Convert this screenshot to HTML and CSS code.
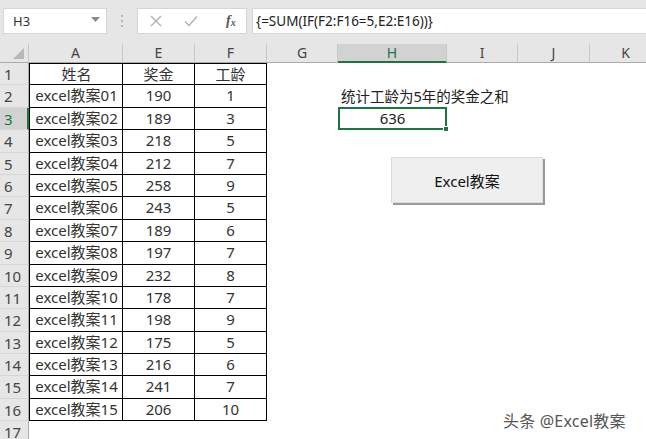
FILE: index.html
```html
<!DOCTYPE html>
<html lang="zh">
<head>
<meta charset="utf-8">
<link rel="stylesheet" href="styles.css">
</head>
<body>
<div class="app">
  <div class="toolbar">
    <div class="namebox"><span class="nb-text">H3</span>
      <svg class="nb-arrow" width="9" height="6" viewBox="0 0 9 6"><path d="M0 0h9L4.5 5z" fill="#8a8a8a"/></svg>
    </div>
    <div class="dots"><i></i><i></i><i></i></div>
    <div class="fbtns">
      <svg width="12" height="12" viewBox="0 0 12 12"><path d="M1 1L11 11M11 1L1 11" stroke="#b0b0b0" stroke-width="1.3"/></svg>
      <svg width="14" height="12" viewBox="0 0 14 12"><path d="M1 6.5L5 10.5L13 1.5" stroke="#b0b0b0" stroke-width="1.4" fill="none"/></svg>
      <span class="fx">f<sub>x</sub></span>
    </div>
    <div class="formula">{=SUM(IF(F2:F16=5,E2:E16))}</div>
  </div>

  <div class="sheet">
    <div class="corner"><svg width="11" height="11" viewBox="0 0 11 11"><path d="M11 0V11H0z" fill="#b7b7b7"/></svg></div>
    <div class="ch">A</div><div class="ch">E</div><div class="ch">F</div><div class="ch">G</div><div class="ch sel">H</div><div class="ch">I</div><div class="ch">J</div><div class="ch">K</div>

    <div class="rh">1</div><div class="c t top first">姓名</div><div class="c t top">奖金</div><div class="c t top">工龄</div><div class="rest"></div>
    <div class="rh">2</div><div class="c t first">excel教案01</div><div class="c t">190</div><div class="c t">1</div><div class="e"></div><div class="lbl">统计工龄为5年的奖金之和</div><div class="e3"></div>
    <div class="rh rsel">3</div><div class="c t first">excel教案02</div><div class="c t">189</div><div class="c t">3</div><div class="e"></div><div class="active">636<span class="handle"></span></div><div class="e3"></div>
    <div class="rh">4</div><div class="c t first">excel教案03</div><div class="c t">218</div><div class="c t">5</div><div class="rest"></div>
    <div class="rh">5</div><div class="c t first">excel教案04</div><div class="c t">212</div><div class="c t">7</div><div class="rest"></div>
    <div class="rh">6</div><div class="c t first">excel教案05</div><div class="c t">258</div><div class="c t">9</div><div class="rest"></div>
    <div class="rh">7</div><div class="c t first">excel教案06</div><div class="c t">243</div><div class="c t">5</div><div class="rest"></div>
    <div class="rh">8</div><div class="c t first">excel教案07</div><div class="c t">189</div><div class="c t">6</div><div class="rest"></div>
    <div class="rh">9</div><div class="c t first">excel教案08</div><div class="c t">197</div><div class="c t">7</div><div class="rest"></div>
    <div class="rh">10</div><div class="c t first">excel教案09</div><div class="c t">232</div><div class="c t">8</div><div class="rest"></div>
    <div class="rh">11</div><div class="c t first">excel教案10</div><div class="c t">178</div><div class="c t">7</div><div class="rest"></div>
    <div class="rh">12</div><div class="c t first">excel教案11</div><div class="c t">198</div><div class="c t">9</div><div class="rest"></div>
    <div class="rh">13</div><div class="c t first">excel教案12</div><div class="c t">175</div><div class="c t">5</div><div class="rest"></div>
    <div class="rh">14</div><div class="c t first">excel教案13</div><div class="c t">216</div><div class="c t">6</div><div class="rest"></div>
    <div class="rh">15</div><div class="c t first">excel教案14</div><div class="c t">241</div><div class="c t">7</div><div class="rest"></div>
    <div class="rh">16</div><div class="c t first">excel教案15</div><div class="c t">206</div><div class="c t">10</div><div class="rest"></div>
    <div class="rh">17</div><div class="rest full"></div>

    <div class="button">Excel教案</div>
  </div>
  <div class="watermark">头条 @Excel教案</div>
</div>
</body>
</html>
```
FILE: styles.css
```css
* { box-sizing: border-box; }
html, body { margin: 0; padding: 0; background: #fff; }
.app {
  width: 646px; height: 439px; overflow: hidden; position: relative;
  font-family: "Noto Sans", "Noto Sans CJK SC", sans-serif;
  color: #333;
}
.toolbar {
  height: 44px; background: #e6e6e6;
  display: flex; align-items: flex-start; padding-top: 8px; padding-left: 3px;
}
.namebox {
  width: 104px; height: 26px; background: #fff; border: 1px solid #d6d6d6;
  display: flex; align-items: center; justify-content: space-between;
  padding: 0 6px 0 9px; font-size: 13px; color: #333;
}
.nb-arrow { margin-top: -2px; }
.dots {
  width: 30px; height: 26px; display: flex; flex-direction: column;
  align-items: center; justify-content: center; gap: 3px;
}
.dots i { display: block; width: 2px; height: 2px; background: #b8b8b8; }
.fbtns {
  width: 110px; height: 26px; background: #fff; border: 1px solid #d6d6d6;
  display: flex; align-items: center; padding-left: 12px; gap: 22px;
}
.fx { font-family: "Liberation Serif", serif; font-style: italic; font-weight: bold; font-size: 14px; color: #555; margin-left: 6px; }
.fx sub { font-size: 10px; vertical-align: -1px; }
.formula {
  flex: 1; height: 26px; background: #fff; border: 1px solid #d6d6d6; border-right: none;
  margin-left: 5px; padding-left: 3px; font-size: 13.5px; line-height: 24px; color: #222;
}
.sheet {
  position: relative;
  display: grid;
  grid-template-columns: 29px 94px 72px 72px 71px 109px 71px 72px 72px;
  grid-template-rows: 19px repeat(17, 22.4px);
}
.corner {
  background: #e6e6e6; border-right: 1px solid #c8c8c8; border-bottom: 1px solid #ababab;
  display: flex; align-items: flex-end; justify-content: flex-end; padding: 0 4px 3px 0;
}
.ch {
  background: #e6e6e6; border-right: 1px solid #c8c8c8; border-bottom: 1px solid #ababab;
  text-align: center; font-size: 14px; line-height: 18px; color: #444;
}
.ch.sel { background: #d2d2d2; border-bottom: 2px solid #217346; color: #217346; }
.rh {
  background: #e6e6e6; border-right: 1px solid #ababab; border-bottom: 1px solid #d6d6d6;
  font-size: 15px; line-height: 22px; color: #444; padding-left: 4px;
}
.rh.rsel { background: #d2d2d2; border-right: 2px solid #217346; color: #217346; }
.c {
  border-right: 1px solid #000; border-bottom: 1px solid #000;
  text-align: center; font-size: 15px; line-height: 21px; white-space: nowrap; color: #333;
}
.c.top { border-top: 1px solid #000; line-height: 20px; }
.c.first { border-left: 1px solid #000; padding-left: 1px; }
.rest { grid-column: span 5; }
.rest.full { grid-column: span 8; }
.e3 { grid-column: span 3; }
.lbl {
  font-size: 14.5px; line-height: 22px; white-space: nowrap; color: #222;
  padding-left: 3px; overflow: visible; position: relative; z-index: 1;
}
.active {
  position: relative; border: 2px solid #217346; margin: -1px 0 0 0; height: 23.4px;
  text-align: center; font-size: 15px; line-height: 19px; color: #222;
}
.handle {
  position: absolute; right: -4px; bottom: -4px; width: 6px; height: 6px;
  background: #217346; border: 1px solid #fff;
}
.button {
  position: absolute; left: 391px; top: 113px; width: 152px; height: 46px;
  background: #efefef; border: 1px solid #dcdcdc;
  box-shadow: 2px 2px 0 #9a9a9a;
  display: flex; align-items: center; justify-content: center;
  font-size: 15px; color: #111;
}
.watermark {
  position: absolute; left: 503px; top: 408px;
  font-size: 16px; color: #555; letter-spacing: 0.2px;
  text-shadow: 0 0 2px #fff, 0 0 2px #fff, 1px 1px 0 #fff, -1px -1px 0 #fff;
}
```
